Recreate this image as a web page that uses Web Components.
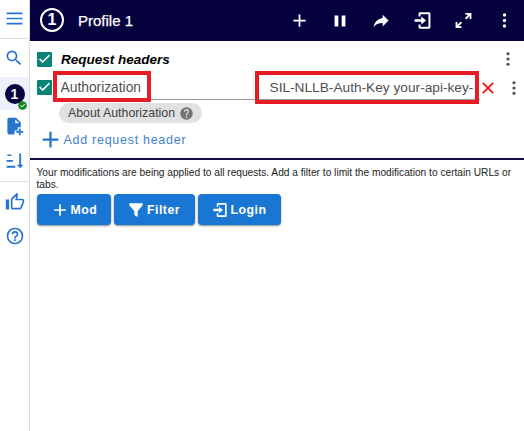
<!DOCTYPE html>
<html lang="en">
<head>
<meta charset="utf-8">
<title>Profile 1</title>
<style>
html,body{margin:0;height:100%;background:#fff;overflow:hidden;font-family:"Liberation Sans",Arial,sans-serif}
</style>
</head>
<body>
<mod-app></mod-app>
<script>
const icons = {
  menu: '<path d="M2 4.500h20v2.200H2zM2 10.900h20v2.200H2zM2 17.300h20v2.200H2z"/>',
  search: '<path d="M15.500 14h-.79l-.28-.27A6.470 6.470 0 0 0 16 9.500 6.500 6.500 0 1 0 9.500 16c1.610 0 3.090-.59 4.230-1.570l.27.28v.79l5 4.990L20.490 19l-4.990-5zm-6 0C7.010 14 5 11.990 5 9.500S7.010 5 9.500 5 14 7.010 14 9.500 11.990 14 9.500 14z"/>',
  fileAdd: '<path d="M5 1h9l6 6v6h-4v4h-4v5H5c-1.100 0-2-.9-2-2V3c0-1.100.9-2 2-2zm8 2v5h5zM17.500 14.500h2.300v3.200H23V20h-3.200v3.200h-2.300V20h-3.200v-2.300h3.200z"/>',
  sort: '<path d="M3 3h5v2.200H3zM2 10h8v2.200H2zM2 17.500h11v2.500H2zM18 2h2.300v14h3l-4.150 4.500L15 16h3z"/>',
  thumb: '<path d="M1 9h4v12H1zM21 8h-6.310l.95-4.570.03-.32c0-.41-.17-.79-.44-1.060L14.170 1 7.580 7.590C7.220 7.950 7 8.450 7 9v10c0 1.100.9 2 2 2h9c.83 0 1.540-.5 1.840-1.220l3.020-7.050c.09-.23.14-.47.14-.73v-2c0-1.100-.9-2-2-2zm0 4-3 7H9V9l4.340-4.340L12.230 10H21z"/>',
  help: '<path d="M11 18h2v-2h-2zm1-16a10 10 0 1 0 0 20 10 10 0 0 0 0-20zm0 18a8 8 0 1 1 0-16 8 8 0 0 1 0 16zm0-14a4 4 0 0 0-4 4h2c0-1.100.9-2 2-2s2 .9 2 2c0 2-3 1.750-3 5h2c0-2.250 3-2.500 3-5a4 4 0 0 0-4-4z"/>',
  helpFill: '<path d="M12 2a10 10 0 1 0 0 20 10 10 0 0 0 0-20zm1 17h-2v-2h2zm2.070-7.750-.9.920C13.450 12.900 13 13.500 13 15h-2v-.5c0-1.100.45-2.100 1.170-2.830l1.240-1.260A2 2 0 1 0 10 9H8a4 4 0 1 1 7.070 2.250z"/>',
  plus: '<path d="M19 13h-6v6h-2v-6H5v-2h6V5h2v6h6z"/>',
  pause: '<path d="M5.500 18.500h4.500v-13H5.500zm8.500-13v13h4.500v-13z"/>',
  share: '<path d="M21 11.500 14 4.500v4C7 9.500 4 14.500 3 19.500c2.500-3.500 6-5.100 11-5.100v4.100z"/>',
  login: '<path d="M9 1.500h11c1.100 0 2 .9 2 2v17c0 1.100-.9 2-2 2H9c-1.100 0-2-.9-2-2V17h2.500v3h10V4h-10v3H7V3.500c0-1.100.9-2 2-2zM10.500 7l6 5-6 5v-3.300H2v-3.400h8.500z"/>',
  expand: '<path d="M14.500 2.500H22V10h-2.300V6.400l-4.200 4.200-1.700-1.700 4.200-4.100h-3.500zM9.500 21.500H2V14h2.300v3.600l4.200-4.200 1.700 1.700L6 19.200h3.500z"/>',
  dots: '<circle cx="12" cy="5" r="2.150"/><circle cx="12" cy="12" r="2.150"/><circle cx="12" cy="19" r="2.150"/>',
  close: '<path d="M19 6.500 17.500 5 12 10.500 6.500 5 5 6.500 10.500 12 5 17.500 6.500 19 12 13.500 17.500 19 19 17.500 13.500 12z"/>',
  filter: '<path d="M2 2h20v3l-7.500 9v8.500l-5-3V14L2 5z"/>',
  check: '<path d="M9 17.500 3.500 12 5 10.500l4 4 10-10L20.500 6z" stroke="#fff" stroke-width=".5"/>',
  badge: '<circle cx="12" cy="12" r="11.500"/><path d="m6.500 12 4 4 7.500-8" fill="none" stroke="#fff" stroke-width="2.600"/>'
};
function define(name, css, html) {
  customElements.define(name, class extends HTMLElement {
    connectedCallback() {
      if (this.shadowRoot) return;
      const t = document.createElement('template');
      t.innerHTML = `<style>${css}</style>${html}`;
      this.attachShadow({mode: 'open'}).append(t.content.cloneNode(true));
    }
  });
}
customElements.define('m-icon', class extends HTMLElement {
  connectedCallback() {
    if (this.shadowRoot) return;
    const s = this.getAttribute('size') || 20;
    this.attachShadow({mode: 'open'}).innerHTML =
      `<style>:host{display:block;flex:none;width:${s}px;height:${s}px}svg{display:block;fill:currentColor}</style>
       <svg width="${s}" height="${s}" viewBox="0 0 24 24">${icons[this.getAttribute('name')]}</svg>`;
  }
});
define('check-box', ':host{display:flex;flex:none;width:15px;height:15px;background:#088477;border-radius:1px;color:#fff;align-items:center;justify-content:center}',
  '<m-icon name="check" size="15"></m-icon>');
define('side-bar', `
  :host{display:flex;flex-direction:column;width:29px;border-right:1px solid #d9dbe0;color:#2474d0;background:#fff}
  div{display:grid;place-items:center;flex:none}
  .menu{height:39px;padding-bottom:2px;border-bottom:1px solid #dcdee4;box-sizing:border-box}
  .search{height:38px;padding-right:1px}.profile{height:33px;background:#edf2fa;position:relative}
  .num{width:20px;height:20px;border-radius:50%;background:#06033f;color:#fff;font:bold 14px/20px "Liberation Sans",Arial,sans-serif}
  .ok{position:absolute;left:18px;top:24px;color:#118a20}
  .file{height:33px}.sort{height:39px;padding:0 1px 2px 0;border-bottom:1px solid #dcdee4;box-sizing:border-box}
  .thumb{height:40px}.help{height:27px}`,
  `<div class="menu"><m-icon name="menu" size="19"></m-icon></div>
   <div class="search"><m-icon name="search" size="20"></m-icon></div>
   <div class="profile"><div class="num">1</div><m-icon class="ok" name="badge" size="9"></m-icon></div>
   <div class="file"><m-icon name="fileAdd" size="19"></m-icon></div>
   <div class="sort"><m-icon name="sort" size="19"></m-icon></div>
   <div class="thumb"><m-icon name="thumb" size="20"></m-icon></div>
   <div class="help"><m-icon name="help" size="20"></m-icon></div>`);
define('top-bar', `
  :host{display:flex;height:41px;background:#05013f;color:#fff;align-items:center;padding-left:10px;box-sizing:border-box}
  .n{box-sizing:border-box;width:24px;height:24px;border:2px solid #fff;border-radius:50%;font:bold 16px/20px "Liberation Sans",Arial,sans-serif;text-align:center;margin-top:-1px}
  .t{font-size:15px;margin-left:14px;-webkit-text-stroke:.25px #fff;flex:1}
  .a{display:grid;grid-template-columns:repeat(6,41px);place-items:center;margin-right:-.5px}`,
  `<div class="n">1</div><div class="t">Profile 1</div>
   <div class="a"><m-icon name="plus" size="21"></m-icon><m-icon name="pause"></m-icon><m-icon name="share"></m-icon><m-icon name="login" size="19"></m-icon><m-icon name="expand" size="19"></m-icon><m-icon name="dots" size="19"></m-icon></div>`);
define('header-group', `
  :host{display:block;height:117px;border-bottom:2px solid #120d46;color:#505050;position:relative}
  .row{display:flex;align-items:center;padding-left:7px}
  .r1{height:36px}.r1 b{flex:1;margin-left:9px;font-size:13.500px;font-style:italic;color:#000}
  .r1 m-icon{margin-right:7px}
  .r2{height:21px}
  .name{margin:-1px 0 0 8.500px;font-size:13.800px;width:196px}
  .val{width:207px;margin:-1px 0 0 13px;font-size:13.700px;white-space:nowrap}
  .line{height:1px;background:#999;margin:1px 44px 0 30px}
  .chip{display:flex;align-items:center;gap:4px;width:143px;height:20px;box-sizing:border-box;padding-left:9.500px;margin:3px 0 0 28.500px;border-radius:10px;background:#e1e1e1;font-size:12.350px;color:#424242}
  .chip span{margin-top:-1px}
  .chip m-icon{color:#757575}
  .add{display:flex;align-items:center;height:33px;padding-left:6.500px;gap:0;color:#2474d0;font-size:12.500px;letter-spacing:.72px}
  .add span{color:#3f7fcd}
  .x{color:#f00c12;margin-left:1px}.d{margin-left:7px}
  .mark{position:absolute;box-sizing:border-box;border:4px solid #e91c25}
  .m1{left:23px;top:30px;width:98px;height:31px}.m2{left:225px;top:30px;width:224px;height:33px}`,
  `<div class="row r1"><check-box></check-box><b>Request headers</b><m-icon name="dots" size="18"></m-icon></div>
   <div class="row r2"><check-box></check-box><div class="name">Authorization</div><div class="val">SIL-NLLB-Auth-Key your-api-key-</div><m-icon class="x" name="close" size="20"></m-icon><m-icon class="d" name="dots" size="18"></m-icon></div>
   <div class="line"></div>
   <div class="chip"><span>About Authorization</span><m-icon name="helpFill" size="15"></m-icon></div>
   <div class="add"><m-icon name="plus" size="27"></m-icon><span>Add request header</span></div>
   <div class="mark m1"></div><div class="mark m2"></div>`);
define('action-button', `
  :host{display:flex;align-items:center;justify-content:center;height:31px;border-radius:4px;background:#1976d2;color:#fff;box-shadow:0 1px 2px #0007;font-size:12.300px;font-weight:bold;letter-spacing:.5px;gap:var(--gap,3px)}`,
  '<slot name="icon"></slot><slot></slot>');
define('filter-note', ':host{display:block;padding:7px 0 0 6.500px;font-size:10.180px;line-height:12px;color:#222}', '<slot></slot>');
define('mod-app', `
  :host{display:grid;grid-template-columns:30px 1fr;height:431px}
  .acts{display:grid;grid-template-columns:74px 81px 83px;gap:3px;padding:3px 0 0 6.500px}
  .mod{--gap:1px}`,
  `<side-bar></side-bar><main><top-bar></top-bar><header-group></header-group>
   <filter-note>Your modifications are being applied to all requests. Add a filter to limit the modification to certain URLs or<br>tabs.</filter-note>
   <div class="acts"><action-button class="mod"><m-icon slot="icon" name="plus" size="20"></m-icon>Mod</action-button><action-button><m-icon slot="icon" name="filter" size="16"></m-icon>Filter</action-button><action-button><m-icon slot="icon" name="login" size="16"></m-icon>Login</action-button></div></main>`);
</script>
</body>
</html>
